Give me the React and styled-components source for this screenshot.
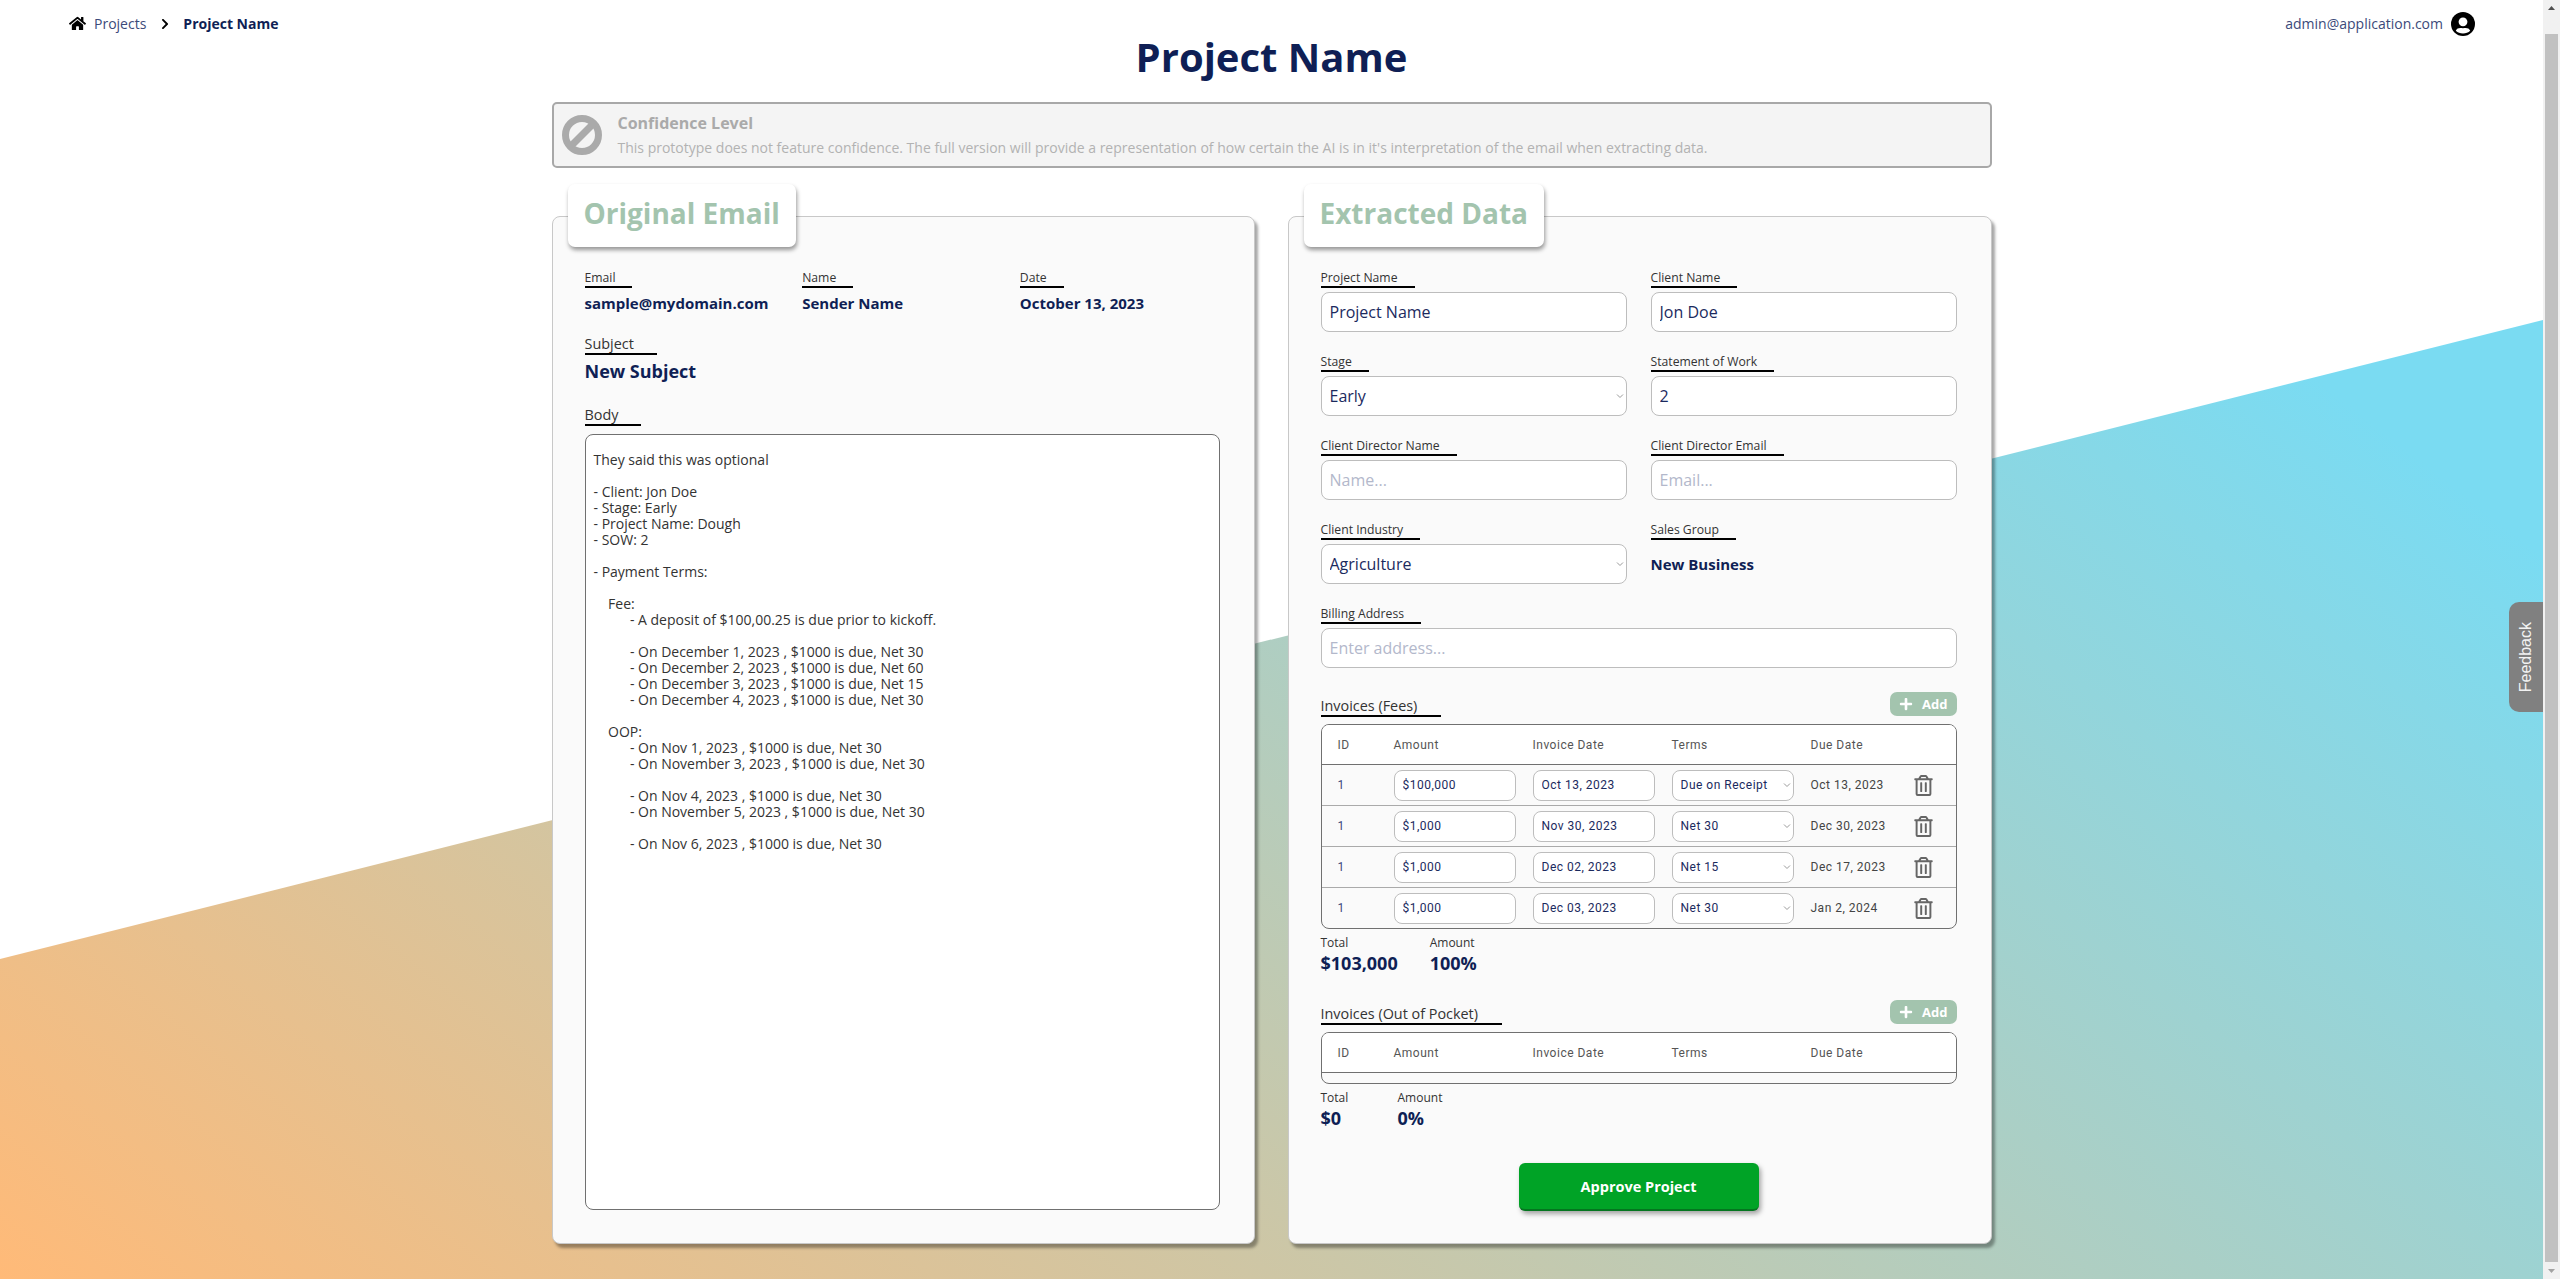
import React from "react";
import styled, { createGlobalStyle } from "styled-components";
import { FaHome, FaChevronRight, FaPlus, FaRegTrashAlt } from "react-icons/fa";

const Global = createGlobalStyle`
  html, body { margin: 0; height: 1279px; overflow: hidden; background: #fff; }
  * { box-sizing: border-box; }
  body { font-family: "Open Sans", "Liberation Sans", sans-serif; color: #222; }
`;

const navy = "#0f1f55";
const sage = "#a3c4ae";

const Shell = styled.div`
  display: flex;
  width: 2560px;
  height: 1279px;
`;
const Main = styled.main`
  position: relative;
  flex: 1;
  min-width: 0;
  overflow: hidden;
`;
const Backdrop = styled.div`
  position: absolute;
  left: 0;
  right: 0;
  top: 320px;
  bottom: 0;
  background: linear-gradient(38deg, #ffba78 0%, #7adbf2 92%);
  clip-path: polygon(0 639px, 100% 0, 100% 100%, 0 100%);
`;
const Content = styled.div`
  position: relative;
`;
const Header = styled.header`
  display: flex;
  justify-content: space-between;
  align-items: center;
  height: 36px;
  padding: 11px 68px 0 69px;
`;
const Crumbs = styled.nav`
  display: flex;
  align-items: center;
  font-size: 14px;
  color: #3c4a7a;
  svg { color: #000; }
`;
const CrumbLink = styled.span`
  margin: 0 13px 0 8px;
`;
const CrumbCurrent = styled.span`
  margin-left: 12px;
  font-weight: 700;
  color: ${navy};
`;
const User = styled.div`
  display: flex;
  align-items: center;
  gap: 8px;
  font-size: 14px;
  color: #3c4a7a;
`;
const Title = styled.h1`
  margin: 0;
  height: 42px;
  line-height: 42px;
  text-align: center;
  font-size: 40px;
  font-weight: 700;
  color: ${navy};
`;
const Container = styled.div`
  width: 1440px;
  margin: 24px auto 0;
`;
const Notice = styled.section`
  display: flex;
  align-items: center;
  gap: 16px;
  height: 66px;
  padding: 0 8px 1px;
  background: #f4f4f4;
  border: 2px solid #a8a8a8;
  border-radius: 5px;
  color: #aaa;
  svg { flex: none; }
`;
const NoticeTitle = styled.div`
  font-size: 16px;
  font-weight: 700;
  line-height: 22px;
`;
const NoticeBody = styled.div`
  margin-top: 4px;
  font-size: 14px;
  line-height: 20px;
  color: #b2b2b2;
`;
const Columns = styled.div`
  display: grid;
  grid-template-columns: 703px 704px;
  column-gap: 33px;
  margin-top: 48px;
`;
const Panel = styled.section`
  display: flex;
  flex-direction: column;
  height: 1028px;
  padding: 0 34px 33px 32px;
  background: #fafafa;
  border: 1px solid #c8c8c8;
  border-radius: 8px;
  box-shadow: 3px 4px 3px rgba(0, 0, 0, 0.35);
  & > * { flex-shrink: 0; }
`;
const Tab = styled.h2`
  align-self: flex-start;
  margin: -33px 0 23px -17px;
  padding: 0 16px;
  height: 63px;
  line-height: 59px;
  background: #fff;
  border-radius: 7px;
  box-shadow: 1px 3px 4px rgba(0, 0, 0, 0.4);
  font-size: 28px;
  font-weight: 700;
  color: ${sage};
`;
const Label = styled.div`
  display: inline-block;
  align-self: flex-start;
  justify-self: start;
  padding-right: ${(p) => p.$pad || 17}px;
  border-bottom: 2px solid #000;
  font-size: ${(p) => (p.$large ? 14.4 : 12.2)}px;
  line-height: ${(p) => (p.$large ? 18 : 16)}px;
  color: #333;
`;
const EmailMeta = styled.div`
  display: grid;
  grid-template-columns: repeat(3, 1fr);
  column-gap: 18px;
`;
const Field = styled.div`
  display: flex;
  flex-direction: column;
  min-width: 0;
`;
const MetaValue = styled.div`
  margin-top: 5px;
  font-size: 15px;
  line-height: 20px;
  font-weight: 700;
  color: ${navy};
`;
const SubjectBlock = styled(Field)`
  margin-top: 22px;
`;
const SubjectValue = styled.div`
  margin-top: 4px;
  font-size: 18px;
  line-height: 24px;
  font-weight: 700;
  color: ${navy};
`;
const BodyBlock = styled(Field)`
  flex: 1;
  margin-top: 23px;
`;
const BodyText = styled.pre`
  flex: 1;
  margin: 8px 0 0;
  padding: 17px 8px 8px;
  background: #fff;
  border: 1px solid #707070;
  border-radius: 8px;
  font-family: "Open Sans", sans-serif;
  font-size: 14px;
  line-height: 16px;
  color: #333;
  white-space: pre-wrap;
`;
const FormGrid = styled.div`
  display: grid;
  grid-template-columns: 306px 306px;
  column-gap: 24px;
  row-gap: 22px;
`;
const Wide = styled(Field)`
  grid-column: 1 / -1;
`;
const Input = styled.input`
  width: 100%;
  height: 40px;
  margin-top: 4px;
  padding: 0 8px;
  background: #fff;
  border: 1px solid #bdbdbd;
  border-radius: 8px;
  font-family: "Open Sans", sans-serif;
  font-size: 16px;
  color: #1b2a5e;
  outline: none;
  &::placeholder { color: #b3b8cb; }
`;
const SelectWrap = styled.div`
  position: relative;
  display: flex;
  width: ${(p) => (p.$small ? "122px" : "100%")};
  margin-top: ${(p) => (p.$small ? 0 : 4)}px;
`;
const Select = styled.select`
  appearance: none;
  width: 100%;
  height: ${(p) => (p.$small ? 31 : 40)}px;
  padding: 0 8px;
  background: #fff;
  border: 1px solid #bdbdbd;
  border-radius: 8px;
  font-family: ${(p) => (p.$small ? "Roboto, sans-serif" : '"Open Sans", sans-serif')};
  font-size: ${(p) => (p.$small ? 12 : 16)}px;
  letter-spacing: ${(p) => (p.$small ? 0.5 : 0)}px;
  color: #1b2a5e;
`;
const Caret = styled.svg`
  position: absolute;
  right: 3px;
  top: 50%;
  width: 8px;
  height: 6px;
  margin-top: -3px;
  fill: none;
  stroke: #9a9a9a;
  stroke-width: 1;
  pointer-events: none;
`;
const StaticValue = styled.div`
  display: flex;
  align-items: center;
  height: 40px;
  margin-top: 4px;
  font-size: 15px;
  font-weight: 700;
  color: ${navy};
`;
const InvoiceHead = styled.div`
  display: flex;
  justify-content: space-between;
  align-items: flex-end;
  height: 25px;
  margin-top: ${(p) => p.$top}px;
  & > ${Label} { align-self: flex-end; }
`;
const AddButton = styled.button`
  display: flex;
  align-items: center;
  gap: 9px;
  align-self: flex-start;
  height: 24px;
  padding: 0 9px;
  background: ${sage};
  border: 0;
  border-radius: 7px;
  font-family: "Open Sans", sans-serif;
  font-size: 13px;
  font-weight: 700;
  color: #fff;
`;
const InvoiceTable = styled.div`
  margin-top: 7px;
  background: #fafafa;
  border: 1px solid #707070;
  border-radius: 8px;
  overflow: hidden;
  font-family: Roboto, "Open Sans", sans-serif;
`;
const gridCols = "72px 139px 139px 139px 100px 1fr";
const HeadRow = styled.div`
  display: grid;
  grid-template-columns: ${gridCols};
  align-items: center;
  height: 40px;
  background: #fff;
  border-bottom: 1px solid #707070;
  font-size: 12px;
  letter-spacing: 0.5px;
  color: #555;
  span:first-child { padding-left: 16px; }
`;
const Row = styled.div`
  display: grid;
  grid-template-columns: ${gridCols};
  align-items: center;
  height: 41px;
  border-bottom: 1px solid #aaa;
  &:last-child { border-bottom: 0; height: 40px; }
`;
const EmptyRow = styled.div`
  height: 10px;
`;
const IdCell = styled.span`
  padding-left: 16px;
  font-size: 12px;
  color: #3c4a7a;
`;
const CellInput = styled.input`
  width: 122px;
  height: 31px;
  padding: 0 8px;
  background: #fff;
  border: 1px solid #bdbdbd;
  border-radius: 8px;
  font-family: Roboto, sans-serif;
  font-size: 12px;
  letter-spacing: 0.5px;
  color: #1b2a5e;
`;
const Cell = styled.span`
  display: flex;
`;
const DueCell = styled.span`
  font-size: 12px;
  letter-spacing: 0.5px;
  color: #444;
`;
const Trash = styled.span`
  display: flex;
  padding-left: 2px;
  color: #666;
`;
const Summary = styled.div`
  display: flex;
  gap: 32px;
  margin-top: 6px;
`;
const SummaryItem = styled.div`
  min-width: 45px;
`;
const SummaryLabel = styled.div`
  font-size: 12px;
  line-height: 16px;
  color: #333;
`;
const SummaryValue = styled.div`
  font-size: 18px;
  line-height: 24px;
  font-weight: 700;
  color: ${navy};
`;
const Approve = styled.button`
  align-self: center;
  width: 240px;
  height: 48px;
  margin-top: 33px;
  background: #00a326;
  border: 0;
  border-bottom: 2px solid #04761f;
  border-radius: 6px;
  box-shadow: 2px 3px 5px rgba(0, 0, 0, 0.35);
  font-family: "Open Sans", sans-serif;
  font-size: 14.5px;
  font-weight: 700;
  color: #fff;
`;
const Feedback = styled.div`
  position: absolute;
  right: 0;
  top: 602px;
  display: flex;
  align-items: center;
  justify-content: center;
  width: 34px;
  height: 110px;
  background: #808080;
  border-radius: 10px 0 0 10px;
  writing-mode: vertical-rl;
  font-family: "Liberation Sans", Arial, sans-serif;
  font-size: 16px;
  color: #f2f2f2;
  span { transform: rotate(180deg); }
`;
const Scrollbar = styled.aside`
  display: flex;
  flex-direction: column;
  align-items: center;
  flex: none;
  width: 17px;
  background: #f1f1f1;
`;
const ScrollArrow = styled.svg`
  flex: none;
  width: 17px;
  height: 17px;
  fill: ${(p) => p.$fill};
`;
const ScrollGap = styled.div`
  flex: none;
  height: 17px;
`;
const Thumb = styled.div`
  flex: 1;
  width: 13px;
  background: #c1c1c1;
`;

const bodyText = `They said this was optional

- Client: Jon Doe
- Stage: Early
- Project Name: Dough
- SOW: 2

- Payment Terms:

    Fee:
          - A deposit of $100,00.25 is due prior to kickoff.

          - On December 1, 2023 , $1000 is due, Net 30
          - On December 2, 2023 , $1000 is due, Net 60
          - On December 3, 2023 , $1000 is due, Net 15
          - On December 4, 2023 , $1000 is due, Net 30

    OOP:
          - On Nov 1, 2023 , $1000 is due, Net 30
          - On November 3, 2023 , $1000 is due, Net 30

          - On Nov 4, 2023 , $1000 is due, Net 30
          - On November 5, 2023 , $1000 is due, Net 30

          - On Nov 6, 2023 , $1000 is due, Net 30`;

const invoices = [
  { amount: "$100,000", date: "Oct 13, 2023", terms: "Due on Receipt", due: "Oct 13, 2023" },
  { amount: "$1,000", date: "Nov 30, 2023", terms: "Net 30", due: "Dec 30, 2023" },
  { amount: "$1,000", date: "Dec 02, 2023", terms: "Net 15", due: "Dec 17, 2023" },
  { amount: "$1,000", date: "Dec 03, 2023", terms: "Net 30", due: "Jan 2, 2024" },
];
const termOptions = ["Due on Receipt", "Net 15", "Net 30", "Net 60"];

const ChevronDown = () => (
  <Caret viewBox="0 0 8 6">
    <path d="M1 1.5 L4 4.5 L7 1.5" />
  </Caret>
);

const Dropdown = ({ small, value, options }) => (
  <SelectWrap $small={small}>
    <Select $small={small} defaultValue={value}>
      {options.map((o) => <option key={o}>{o}</option>)}
    </Select>
    <ChevronDown />
  </SelectWrap>
);

const UserIcon = () => (
  <svg width="24" height="24" viewBox="0 0 24 24" aria-hidden="true">
    <circle cx="12" cy="12" r="12" fill="#000" />
    <circle cx="12" cy="9.8" r="4.4" fill="#fff" />
    <path d="M4.8 18.8C6 15.8 8.6 15.6 12 16.2C15.4 15.6 18 15.8 19.2 18.8C17.4 20.6 14.8 21.6 12 21.6C9.2 21.6 6.6 20.6 4.8 18.8Z" fill="#fff" />
  </svg>
);

const BanIcon = () => (
  <svg width="40" height="40" viewBox="0 0 40 40" fill="none" stroke="#aaa" strokeWidth="7" aria-hidden="true">
    <circle cx="20" cy="20" r="16.5" />
    <line x1="9" y1="31" x2="31" y2="9" />
  </svg>
);

const TableHead = () => (
  <HeadRow>
    <span>ID</span>
    <span>Amount</span>
    <span>Invoice Date</span>
    <span>Terms</span>
    <span>Due Date</span>
    <span />
  </HeadRow>
);

const Add = () => (
  <AddButton>
    <FaPlus size={14} />
    Add
  </AddButton>
);

export default function App() {
  return (
    <Shell>
      <Global />
      <Main>
        <Backdrop />
        <Content>
          <Header>
            <Crumbs>
              <FaHome size={17} />
              <CrumbLink>Projects</CrumbLink>
              <FaChevronRight size={12} />
              <CrumbCurrent>Project Name</CrumbCurrent>
            </Crumbs>
            <User>
              admin@application.com
              <UserIcon />
            </User>
          </Header>
          <Title>Project Name</Title>
          <Container>
            <Notice>
              <BanIcon />
              <div>
                <NoticeTitle>Confidence Level</NoticeTitle>
                <NoticeBody>
                  This prototype does not feature confidence. The full version will provide a representation of how certain the AI is in it's interpretation of the email when extracting data.
                </NoticeBody>
              </div>
            </Notice>
            <Columns>
              <Panel>
                <Tab>Original Email</Tab>
                <EmailMeta>
                  <Field>
                    <Label>Email</Label>
                    <MetaValue>sample@mydomain.com</MetaValue>
                  </Field>
                  <Field>
                    <Label>Name</Label>
                    <MetaValue>Sender Name</MetaValue>
                  </Field>
                  <Field>
                    <Label>Date</Label>
                    <MetaValue>October 13, 2023</MetaValue>
                  </Field>
                </EmailMeta>
                <SubjectBlock>
                  <Label $large $pad={23}>Subject</Label>
                  <SubjectValue>New Subject</SubjectValue>
                </SubjectBlock>
                <BodyBlock>
                  <Label $large $pad={23}>Body</Label>
                  <BodyText>{bodyText}</BodyText>
                </BodyBlock>
              </Panel>
              <Panel>
                <Tab>Extracted Data</Tab>
                <FormGrid>
                  <Field>
                    <Label>Project Name</Label>
                    <Input defaultValue="Project Name" />
                  </Field>
                  <Field>
                    <Label>Client Name</Label>
                    <Input defaultValue="Jon Doe" />
                  </Field>
                  <Field>
                    <Label>Stage</Label>
                    <Dropdown value="Early" options={["Early", "Late"]} />
                  </Field>
                  <Field>
                    <Label>Statement of Work</Label>
                    <Input defaultValue="2" />
                  </Field>
                  <Field>
                    <Label>Client Director Name</Label>
                    <Input placeholder="Name..." />
                  </Field>
                  <Field>
                    <Label>Client Director Email</Label>
                    <Input placeholder="Email..." />
                  </Field>
                  <Field>
                    <Label>Client Industry</Label>
                    <Dropdown value="Agriculture" options={["Agriculture", "Finance"]} />
                  </Field>
                  <Field>
                    <Label>Sales Group</Label>
                    <StaticValue>New Business</StaticValue>
                  </Field>
                  <Wide>
                    <Label>Billing Address</Label>
                    <Input placeholder="Enter address..." />
                  </Wide>
                </FormGrid>
                <InvoiceHead $top={24}>
                  <Label $large $pad={24}>Invoices (Fees)</Label>
                  <Add />
                </InvoiceHead>
                <InvoiceTable>
                  <TableHead />
                  {invoices.map((inv) => (
                    <Row key={inv.date}>
                      <IdCell>1</IdCell>
                      <Cell><CellInput defaultValue={inv.amount} /></Cell>
                      <Cell><CellInput defaultValue={inv.date} /></Cell>
                      <Cell><Dropdown small value={inv.terms} options={termOptions} /></Cell>
                      <DueCell>{inv.due}</DueCell>
                      <Trash><FaRegTrashAlt size={21} /></Trash>
                    </Row>
                  ))}
                </InvoiceTable>
                <Summary>
                  <SummaryItem>
                    <SummaryLabel>Total</SummaryLabel>
                    <SummaryValue>$103,000</SummaryValue>
                  </SummaryItem>
                  <SummaryItem>
                    <SummaryLabel>Amount</SummaryLabel>
                    <SummaryValue>100%</SummaryValue>
                  </SummaryItem>
                </Summary>
                <InvoiceHead $top={25}>
                  <Label $large $pad={24}>Invoices (Out of Pocket)</Label>
                  <Add />
                </InvoiceHead>
                <InvoiceTable>
                  <TableHead />
                  <EmptyRow />
                </InvoiceTable>
                <Summary>
                  <SummaryItem>
                    <SummaryLabel>Total</SummaryLabel>
                    <SummaryValue>$0</SummaryValue>
                  </SummaryItem>
                  <SummaryItem>
                    <SummaryLabel>Amount</SummaryLabel>
                    <SummaryValue>0%</SummaryValue>
                  </SummaryItem>
                </Summary>
                <Approve>Approve Project</Approve>
              </Panel>
            </Columns>
          </Container>
        </Content>
        <Feedback><span>Feedback</span></Feedback>
      </Main>
      <Scrollbar>
        <ScrollArrow viewBox="0 0 17 17" $fill="#505050"><polygon points="8.5,6 12,10 5,10" /></ScrollArrow>
        <ScrollGap />
        <Thumb />
        <ScrollArrow viewBox="0 0 17 17" $fill="#a3a3a3"><polygon points="5,7 12,7 8.5,11" /></ScrollArrow>
      </Scrollbar>
    </Shell>
  );
}
